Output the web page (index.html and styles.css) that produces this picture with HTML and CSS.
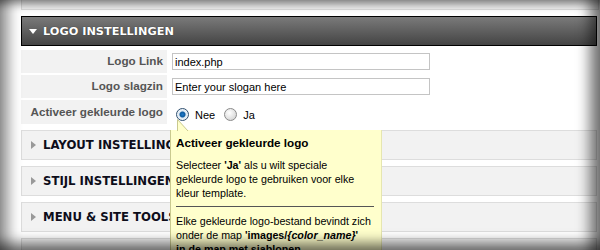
FILE: index.html
```html
<!DOCTYPE html>
<html lang="nl">
<head>
    <meta charset="UTF-8">
    <title>Template instellingen</title>
    <link rel="stylesheet" href="styles.css">
</head>
<body>
<div class="page">
    <div class="prev-panel"></div>

    <!-- Logo instellingen (open) -->
    <div class="section">
        <div class="section-head">
            <span class="arrow-down"></span>
            <span>LOGO INSTELLINGEN</span>
        </div>
        <div class="row">
            <div class="label">Logo Link</div>
            <div class="field"><input type="text" value="index.php"></div>
        </div>
        <div class="row">
            <div class="label">Logo slagzin</div>
            <div class="field"><input type="text" value="Enter your slogan here"></div>
        </div>
        <div class="row row-radio">
            <div class="label">Activeer gekleurde logo</div>
            <div class="field radios">
                <span class="radio checked"></span><span class="radio-text">Nee</span>
                <span class="radio"></span><span class="radio-text">Ja</span>
            </div>
        </div>
    </div>

    <!-- Closed panels -->
    <div class="panel"><span class="arrow-right"></span>LAYOUT INSTELLINGEN</div>
    <div class="panel"><span class="arrow-right"></span>STIJL INSTELLINGEN</div>
    <div class="panel"><span class="arrow-right"></span>MENU &amp; SITE TOOLS</div>
    <div class="panel"></div>

    <!-- Tooltip -->
    <div class="tooltip">
        <svg class="tip-arrow" width="12" height="12" viewBox="0 0 12 12">
            <path d="M0.5 12 L0.5 0.5 L11 12 Z" fill="#ffffcc"/>
            <path d="M0.5 12 L0.5 0.5 L11 12" fill="none" stroke="#c9c98f" stroke-width="1"/>
        </svg>
        <div class="tip-title">Activeer gekleurde logo</div>
        <p>Selecteer <b>'Ja'</b> als u wilt speciale<br>gekleurde logo te gebruiken voor elke<br>kleur template.</p>
        <hr>
        <p>Elke gekleurde logo-bestand bevindt zich<br>onder de map <b>'images/<i>{color_name}</i>'</b><br><b>in de map met sjablonen</b></p>
    </div>
</div>
<div class="vignette"></div>
</body>
</html>
```

FILE: styles.css
```css
body { margin: 0; background: #fff; font-family: "Liberation Sans", Arial, sans-serif; font-size: 11px; overflow: hidden; }
.page { position: relative; width: 600px; height: 250px; padding-left: 21px; box-sizing: border-box; overflow: hidden; }

.prev-panel { height: 9px; width: 576px; background: #f2f2f2; border: 1px solid #ddd; border-top: none; margin-bottom: 6px; }

.section-head {
    height: 28px; width: 574px;
    border: 1px solid #000;
    background: linear-gradient(#7a7a7a, #444);
    color: #fff;
    font-family: "DejaVu Sans", Verdana, sans-serif;
    font-weight: bold; font-size: 11.3px;
    display: flex; align-items: center;
    text-shadow: 0 0 1px #222;
}
.arrow-down { width: 0; height: 0; border-left: 4px solid transparent; border-right: 4px solid transparent; border-top: 5px solid #fff; margin: 1px 6px 0 7px; }

.row { display: flex; margin-top: 2px; height: 23px; }
.section-head + .row { margin-top: 4px; }
.row-radio { height: 24px; }
.label { width: 142px; padding-right: 4px; background: #f2f2f2; color: #555; font-weight: bold; text-align: right; line-height: 22px; font-size: 11.7px; }
.row-radio .label { line-height: 24px; }
.field { padding-left: 5px; display: flex; align-items: center; }
.field input { width: 252px; height: 13px; padding: 1px 2px; border: 1px solid #c4c4c4; font-family: "Liberation Sans", Arial, sans-serif; font-size: 11px; color: #000; margin: 0; outline: none; }
.radios { padding-left: 9px; padding-top: 5px; }
.radio { width: 11px; height: 11px; border-radius: 50%; border: 1px solid #8a8a8a; background: radial-gradient(circle at 40% 35%, #fff, #ccc); display: inline-block; }
.radio.checked { border-color: #2f4f6f; background: radial-gradient(circle, #1e79c8 0, #0b5aa0 2.5px, #d9e6f2 3.5px, #f4f8fb 6px); }
.radio-text { margin: 0 9px 0 6px; color: #000; font-size: 11px; }

.panel {
    height: 28px; width: 574px;
    margin-top: 6px;
    background: #f2f2f2; border: 1px solid #ddd;
    font-family: "DejaVu Sans", Verdana, sans-serif;
    font-weight: bold; font-size: 11.7px; color: #0d0d1a;
    display: flex; align-items: center;
}
.arrow-right { width: 0; height: 0; border-top: 4px solid transparent; border-bottom: 4px solid transparent; border-left: 5px solid #999; margin: 0 7px 0 9px; }

.tooltip {
    position: absolute; left: 170px; top: 130px;
    width: 200px; height: 140px;
    padding: 6px 5px 0 5px;
    background: #ffffcc;
    border-left: 1px solid #c9c98f; border-right: 1px solid #e6e6b0;
    color: #000; font-size: 10.7px; line-height: 14px;
    white-space: nowrap;
}
.tip-arrow { position: absolute; left: 6px; top: -11px; }
.tip-title { font-weight: bold; font-size: 11.7px; margin-bottom: 8px; }
.tooltip p { margin: 0; }
.tooltip hr { border: none; border-top: 1px solid #555; margin: 6px 2px 7px 0; }

.vignette {
    position: absolute; left: 0; top: 0; width: 600px; height: 250px;
    pointer-events: none;
    box-shadow: inset 18px 0 14px -10px rgba(0,0,0,0.45), inset -18px 0 14px -8px rgba(0,0,0,0.55),
                inset 0 12px 10px -8px rgba(0,0,0,0.45), inset 0 -16px 12px -8px rgba(0,0,0,0.5);
}
```
